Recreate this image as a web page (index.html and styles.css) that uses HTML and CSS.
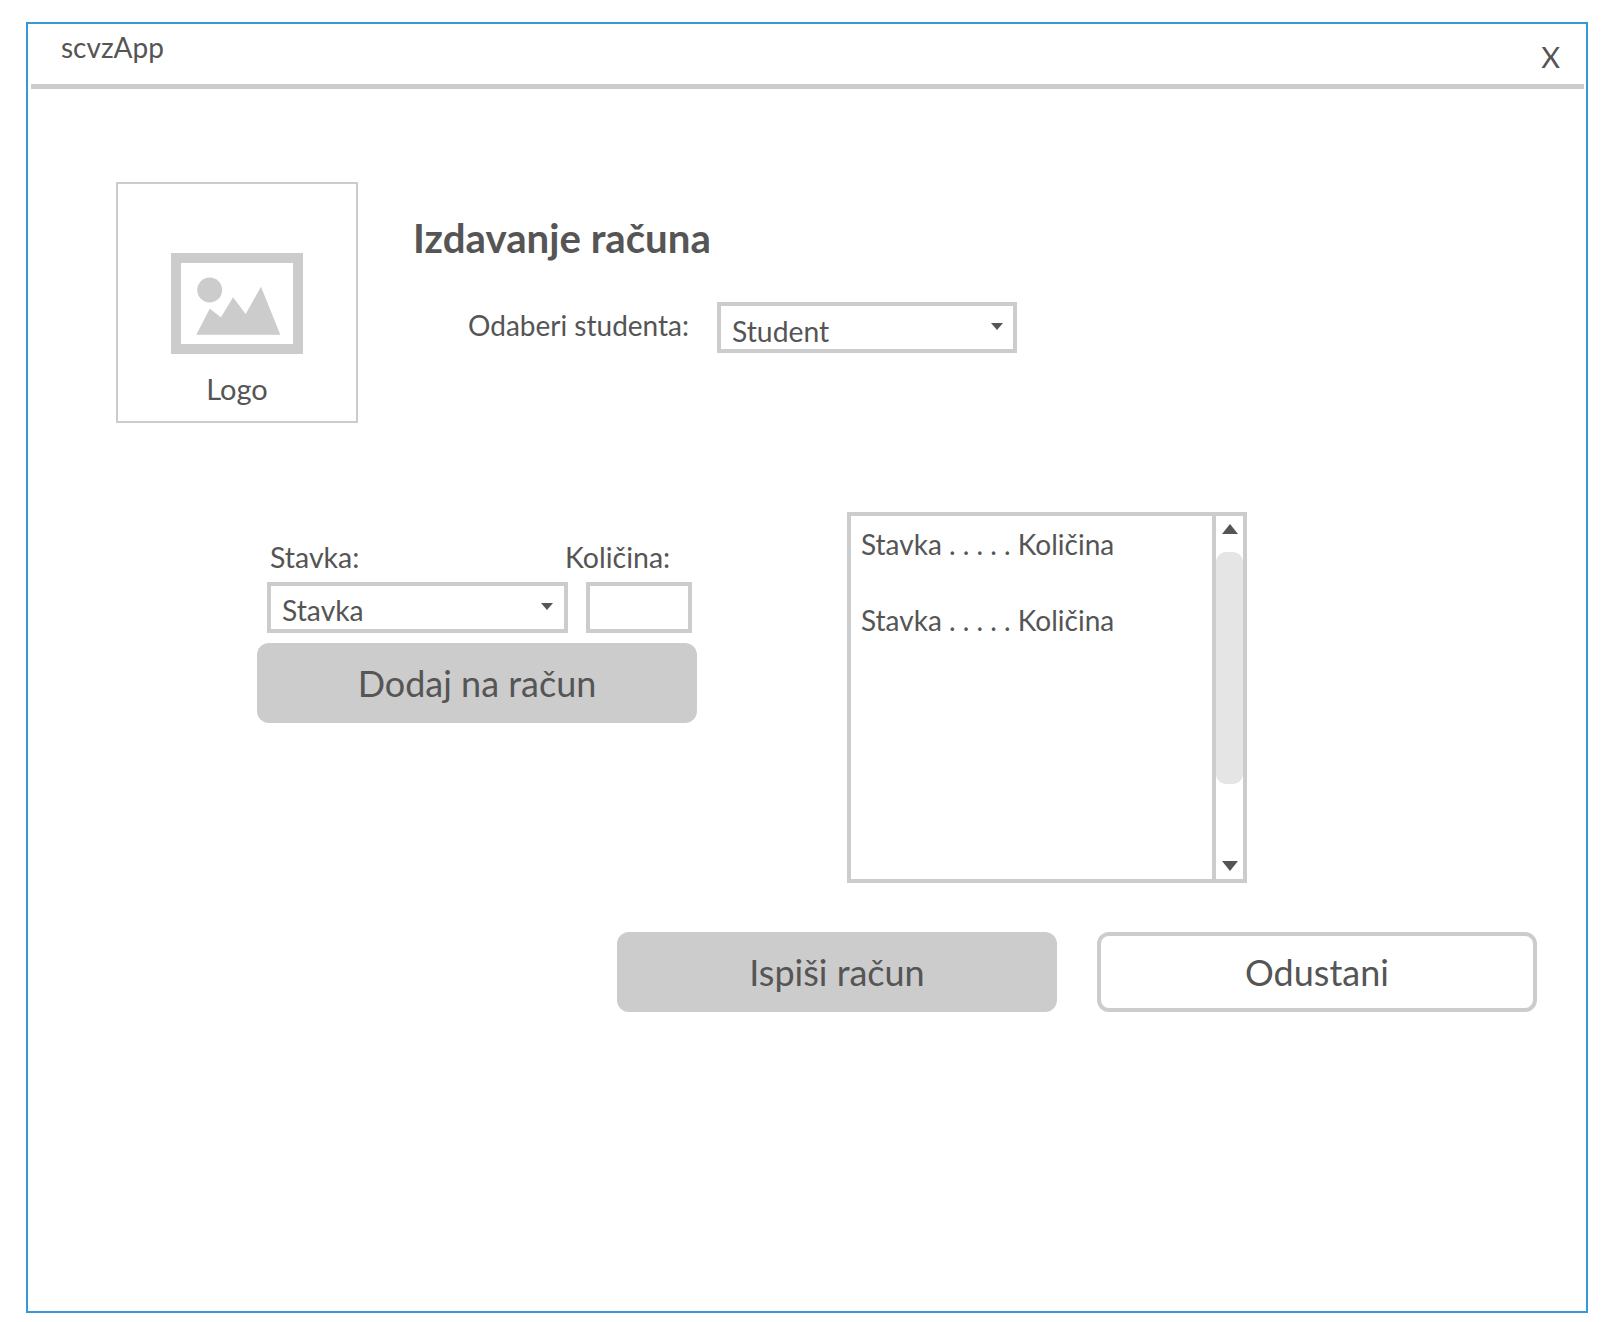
FILE: index.html
```html
<html>
<head>
     <title>scvzApp</title>
     <link rel="stylesheet" href="styles.css">
</head>
<body>
     <div class="window">
          <div class="titleBar">
               <span class="appName">scvzApp</span>
               <span class="closeBtn">X</span>
          </div>

          <div class="topRow">
               <div class="logoBox">
                    <svg class="logoIcon" width="132" height="101" viewBox="0 0 132 101">
                         <rect x="5" y="5" width="122" height="91" fill="none" stroke="#ccc" stroke-width="10"/>
                         <circle cx="38.7" cy="37" r="12.5" fill="#ccc"/>
                         <polygon points="25.3,81.7 38.7,55.7 50,64.3 62,44.3 74.7,61 90,33.7 109.3,81.7" fill="#ccc"/>
                    </svg>
                    <span class="logoText">Logo</span>
               </div>
               <div class="invoiceHead">
                    <h1>Izdavanje računa</h1>
                    <div class="studentRow">
                         <label>Odaberi studenta:</label>
                         <div class="dropdown studentSelect">
                              <span>Student</span>
                              <i class="caret"></i>
                         </div>
                    </div>
               </div>
          </div>

          <div class="middleRow">
               <div class="itemForm">
                    <div class="itemLabels">
                         <label>Stavka:</label>
                         <label>Količina:</label>
                    </div>
                    <div class="itemInputs">
                         <div class="dropdown itemSelect">
                              <span>Stavka</span>
                              <i class="caret"></i>
                         </div>
                         <div class="qtyInput"></div>
                    </div>
                    <div class="btn btnFilled">Dodaj na račun</div>
               </div>

               <div class="listBox">
                    <div class="listItems">
                         <p>Stavka . . . . . Količina</p>
                         <p>Stavka . . . . . Količina</p>
                    </div>
                    <div class="scrollBar">
                         <i class="arrowUp"></i>
                         <div class="thumb"></div>
                         <i class="arrowDown"></i>
                    </div>
               </div>
          </div>

          <div class="bottomRow">
               <div class="btn btnFilled">Ispiši račun</div>
               <div class="btn btnOutline">Odustani</div>
          </div>
     </div>
</body>
</html>
```

FILE: styles.css
```css
body {
     margin: 0;
     background-color: #fff;
     font-family: Lato, "Open Sans", sans-serif;
     color: #555;
}

.window {
     width: 1562px;
     height: 1291px;
     margin: 22px 0 0 26px;
     box-sizing: border-box;
     border: 2px solid #3498db;
}

.titleBar {
     display: flex;
     justify-content: space-between;
     height: 60px;
     margin: 0 2px 0 3px;
     padding-left: 30px;
     border-bottom: 5px solid #ccc;
}

.appName {
     font-size: 28px;
     line-height: 46px;
}

.closeBtn {
     margin-right: 24px;
     margin-top: 15px;
     font-size: 29px;
     line-height: 36px;
}

.topRow {
     display: flex;
     margin-top: 93px;
     padding-left: 88px;
}

.logoBox {
     display: flex;
     flex-direction: column;
     align-items: center;
     width: 242px;
     height: 241px;
     box-sizing: border-box;
     border: 2px solid #ccc;
}

.logoIcon {
     margin-top: 69px;
}

.logoText {
     margin-top: 17px;
     font-size: 29px;
     line-height: 36px;
}

.invoiceHead {
     margin-left: 55px;
}

.invoiceHead h1 {
     margin: 33px 0 0 0;
     font-size: 40.2px;
     font-weight: 700;
     line-height: 46px;
}

.studentRow {
     display: flex;
     margin-top: 41px;
     padding-left: 55px;
}

.studentRow label {
     width: 249px;
     font-size: 28px;
     line-height: 46px;
}

.dropdown {
     position: relative;
     box-sizing: border-box;
     height: 51px;
     padding-left: 11px;
     border: 4px solid #ccc;
     font-size: 28.3px;
     line-height: 50px;
}

.studentSelect {
     width: 300px;
}

.itemSelect {
     width: 301px;
     line-height: 49px;
}

.caret {
     position: absolute;
     top: 17px;
     right: 10px;
     border-left: 6px solid transparent;
     border-right: 6px solid transparent;
     border-top: 7px solid #555;
}

.itemSelect .caret {
     right: 11px;
}

.middleRow {
     display: flex;
     margin-top: 89px;
     padding-left: 229px;
}

.itemForm {
     width: 440px;
     margin-right: 150px;
     padding-top: 23px;
}

.itemLabels {
     display: flex;
     padding-left: 13px;
     font-size: 28.5px;
     line-height: 44px;
}

.itemLabels label:first-child {
     width: 295px;
}

.itemInputs {
     display: flex;
     gap: 18px;
     margin: 3px 0 10px 10px;
}

.qtyInput {
     width: 106px;
     height: 51px;
     box-sizing: border-box;
     border: 4px solid #ccc;
}

.btn {
     display: flex;
     justify-content: center;
     align-items: center;
     height: 80px;
     box-sizing: border-box;
     border-radius: 12px;
     font-size: 36px;
}

.btnFilled {
     background-color: #ccc;
}

.btnOutline {
     border: 4px solid #ccc;
     background-color: #fff;
}

.listBox {
     display: flex;
     width: 400px;
     height: 371px;
     box-sizing: border-box;
     border: 4px solid #ccc;
}

.listItems {
     width: 365px;
     box-sizing: border-box;
     padding-left: 10px;
     border-right: 4px solid #ccc;
     font-size: 28px;
}

.listItems p {
     margin: 11px 0 42px 0;
     line-height: 34px;
}

.scrollBar {
     position: relative;
     flex: 1;
}

.thumb {
     height: 232px;
     margin-top: 36px;
     border-radius: 10px;
     background-color: #e5e5e5;
}

.arrowUp,
.arrowDown {
     position: absolute;
     left: 6px;
     border-left: 8px solid transparent;
     border-right: 8px solid transparent;
}

.arrowUp {
     top: 8px;
     border-bottom: 10px solid #555;
}

.arrowDown {
     bottom: 8px;
     border-top: 10px solid #555;
}

.bottomRow {
     display: flex;
     gap: 40px;
     margin-top: 49px;
     padding-left: 589px;
}

.bottomRow .btn {
     width: 440px;
}
```
